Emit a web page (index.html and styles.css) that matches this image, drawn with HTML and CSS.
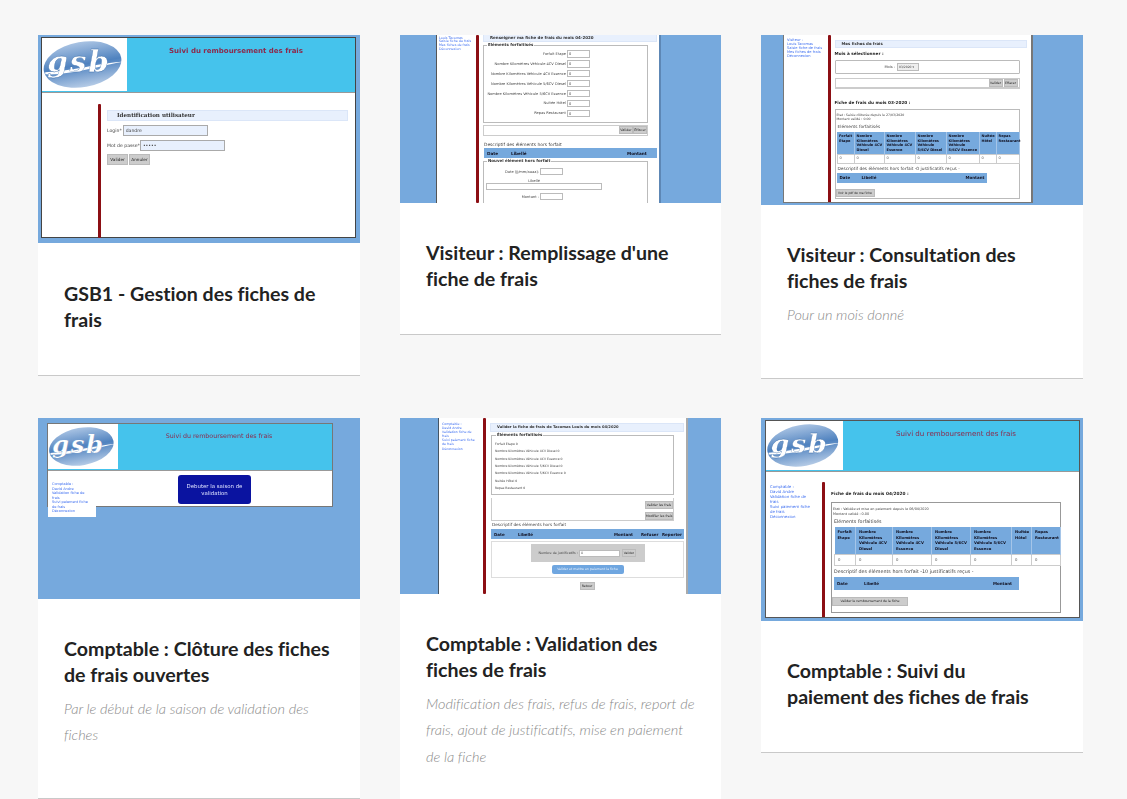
FILE: index.html
```html
<!DOCTYPE html>
<html lang="en">
	<head>
		<title>GSB1 - Gestion des fiches de frais</title>
		<link rel="stylesheet" href="styles.css">
	</head>
	<body>
		<svg class="defs" width="0" height="0">
			<defs>
				<linearGradient id="oval" x1="0" y1="0" x2="0" y2="1">
					<stop offset="0" stop-color="#a9c3e3"/>
					<stop offset="0.5" stop-color="#4f82bf"/>
					<stop offset="1" stop-color="#b5cbe6"/>
				</linearGradient>
				<symbol id="gsb" viewBox="0 0 86 54">
					<ellipse cx="41" cy="27" rx="40" ry="23" transform="rotate(-10 41 27)" fill="url(#oval)"/>
					<path d="M3 35 C30 34 60 25 84 24 C60 28 30 38 3 37z" fill="#fff"/>
					<text x="5" y="35" class="gsb-text">gsb</text>
				</symbol>
			</defs>
		</svg>
		<main class="grid">
			<article class="card">
				<div class="shot shot1">
					<div class="win win1">
						<header class="hdr">
							<svg class="logo"><use href="#gsb"/></svg>
							<div class="hdr-title">Suivi du remboursement des frais</div>
						</header>
						<div class="page">
							<nav class="menu"></nav>
							<div class="bar"></div>
							<div class="main">
								<div class="heading">Identification utilisateur</div>
								<div class="login"><span>Login*</span><i class="field">dandre</i></div>
								<div class="login"><span>Mot de passe*</span><i class="field">•••••</i></div>
								<div class="btns"><b class="btn">Valider</b><b class="btn">Annuler</b></div>
							</div>
						</div>
					</div>
				</div>
				<div class="text">
					<h2>GSB1 - Gestion des fiches de frais</h2>
				</div>
			</article>

			<article class="card">
				<div class="shot shot2">
					<div class="win win2">
						<div class="page">
							<nav class="menu">
								<a>Visiteur :</a>
								<a>Louis Tacomas</a>
								<a>Saisie fiche de frais</a>
								<a>Mes fiches de frais</a>
								<a>Déconnexion</a>
							</nav>
							<div class="bar"></div>
							<div class="main">
								<div class="heading">Renseigner ma fiche de frais du mois 04-2020</div>
								<fieldset class="set rows">
									<legend>Eléments forfaitisés</legend>
									<div class="row"><span>Forfait Etape</span><i class="field">0</i></div>
									<div class="row"><span>Nombre Kilomètres Véhicule 4CV Diesel</span><i class="field">0</i></div>
									<div class="row"><span>Nombre Kilomètres Véhicule 4CV Essence</span><i class="field">0</i></div>
									<div class="row"><span>Nombre Kilomètres Véhicule 5/6CV Diesel</span><i class="field">0</i></div>
									<div class="row"><span>Nombre Kilomètres Véhicule 5/6CV Essence</span><i class="field">0</i></div>
									<div class="row"><span>Nuitée Hôtel</span><i class="field">0</i></div>
									<div class="row"><span>Repas Restaurant</span><i class="field">0</i></div>
								</fieldset>
								<div class="actions"><b class="btn">Valider</b><b class="btn">Effacer</b></div>
								<div class="sub">Descriptif des éléments hors forfait</div>
								<div class="thead"><span>Date</span><span>Libellé</span><span>Montant</span></div>
								<fieldset class="set extra">
									<legend>Nouvel élément hors forfait</legend>
									<div class="row"><span>Date (jj/mm/aaaa):</span><i class="field"></i></div>
									<div class="lib">Libellé</div>
									<i class="field wide"></i>
									<div class="row"><span>Montant :</span><i class="field"></i></div>
								</fieldset>
							</div>
						</div>
					</div>
				</div>
				<div class="text">
					<h2>Visiteur : Remplissage d'une fiche de frais</h2>
				</div>
			</article>

			<article class="card">
				<div class="shot shot3">
					<div class="win win3">
						<div class="page">
							<nav class="menu">
								<a>Visiteur :</a>
								<a>Louis Tacomas</a>
								<a>Saisie fiche de frais</a>
								<a>Mes fiches de frais</a>
								<a>Déconnexion</a>
							</nav>
							<div class="bar"></div>
							<div class="main">
								<div class="heading">Mes fiches de frais</div>
								<div class="strong pick">Mois à sélectionner :</div>
								<div class="set month"><span>Mois :</span><i class="select">03/2020 ▾</i></div>
								<div class="actions"><b class="btn">Valider</b><b class="btn">Effacer</b></div>
								<div class="strong period">Fiche de frais du mois 03-2020 :</div>
								<div class="set sheet">
									<div class="etat">Etat : Saisie clôturée depuis le 27/03/2020<br>Montant validé : 0.00</div>
									<div class="sub">Eléments forfaitisés</div>
									<table class="tbl">
										<tr><th>Forfait Etape</th><th>Nombre Kilomètres Véhicule 4CV Diesel</th><th>Nombre Kilomètres Véhicule 4CV Essence</th><th>Nombre Kilomètres Véhicule 5/6CV Diesel</th><th>Nombre Kilomètres Véhicule 5/6CV Essence</th><th>Nuitée Hôtel</th><th>Repas Restaurant</th></tr>
										<tr><td>0</td><td>0</td><td>0</td><td>0</td><td>0</td><td>0</td><td>0</td></tr>
									</table>
									<div class="sub after">Descriptif des éléments hors forfait -0 justificatifs reçus -</div>
									<div class="thead"><span>Date</span><span>Libellé</span><span>Montant</span></div>
									<b class="btn last">Voir le pdf de ma fiche</b>
								</div>
							</div>
						</div>
					</div>
				</div>
				<div class="text">
					<h2>Visiteur : Consultation des fiches de frais</h2>
					<p>Pour un mois donné</p>
				</div>
			</article>

			<article class="card">
				<div class="shot shot4">
					<div class="win win4">
						<header class="hdr">
							<svg class="logo"><use href="#gsb"/></svg>
							<div class="hdr-title">Suivi du remboursement des frais</div>
						</header>
						<div class="page">
							<nav class="menu">
								<a>Comptable :</a>
								<a>David Andre</a>
								<a>Validation fiche de<br>frais</a>
								<a>Suivi paiement fiche<br>de frais</a>
								<a>Déconnexion</a>
							</nav>
							<div class="main">
								<div class="start">Debuter la saison de validation</div>
							</div>
						</div>
					</div>
				</div>
				<div class="text">
					<h2>Comptable : Clôture des fiches de frais ouvertes</h2>
					<p>Par le début de la saison de validation des fiches</p>
				</div>
			</article>

			<article class="card">
				<div class="shot shot5">
					<div class="win win5">
						<div class="page">
							<nav class="menu">
								<a>Comptable :</a>
								<a>David Andre</a>
								<a>Validation fiche de<br>frais</a>
								<a>Suivi paiement fiche<br>de frais</a>
								<a>Déconnexion</a>
							</nav>
							<div class="bar"></div>
							<div class="main">
								<div class="heading">Valider la fiche de frais de Tacomas Louis du mois 04/2020</div>
								<fieldset class="set lines">
									<legend>Éléments forfaitisés</legend>
									<div>Forfait Etape 0</div>
									<div>Nombre Kilomètres Véhicule 4CV Diesel 0</div>
									<div>Nombre Kilomètres Véhicule 4CV Essence 0</div>
									<div>Nombre Kilomètres Véhicule 5/6CV Diesel 0</div>
									<div>Nombre Kilomètres Véhicule 5/6CV Essence 0</div>
									<div>Nuitée Hôtel 0</div>
									<div>Repas Restaurant 0</div>
								</fieldset>
								<div class="actions stack"><b class="btn">Valider les frais</b><b class="btn">Modifier les frais</b></div>
								<div class="sub">Descriptif des éléments hors forfait</div>
								<div class="thead"><span>Date</span><span>Libellé</span><span>Montant</span><span>Refuser</span><span>Reporter</span></div>
								<div class="set pay">
									<div class="just"><span>Nombre de justificatifs :</span><i class="field">0</i><b class="btn">Valider</b></div>
									<div class="paybtn">Valider et mettre en paiement la fiche</div>
								</div>
								<b class="btn back">Retour</b>
							</div>
						</div>
					</div>
				</div>
				<div class="text">
					<h2>Comptable : Validation des fiches de frais</h2>
					<p>Modification des frais, refus de frais, report de frais, ajout de justificatifs, mise en paiement de la fiche</p>
				</div>
			</article>

			<article class="card">
				<div class="shot shot6">
					<div class="win win6">
						<header class="hdr">
							<svg class="logo"><use href="#gsb"/></svg>
							<div class="hdr-title">Suivi du remboursement des frais</div>
						</header>
						<div class="page">
							<nav class="menu">
								<a>Comptable :</a>
								<a>David Andre</a>
								<a>Validation fiche de<br>frais</a>
								<a>Suivi paiement fiche<br>de frais</a>
								<a>Déconnexion</a>
							</nav>
							<div class="bar"></div>
							<div class="main">
								<div class="strong period">Fiche de frais du mois 04/2020 :</div>
								<div class="set sheet">
									<div class="etat">Etat : Validée et mise en paiement depuis le 06/04/2020<br>Montant validé : 0.00</div>
									<div class="sub">Eléments forfaitisés</div>
									<table class="tbl">
										<tr><th>Forfait Etape</th><th>Nombre Kilomètres Véhicule 4CV Diesel</th><th>Nombre Kilomètres Véhicule 4CV Essence</th><th>Nombre Kilomètres Véhicule 5/6CV Diesel</th><th>Nombre Kilomètres Véhicule 5/6CV Essence</th><th>Nuitée Hôtel</th><th>Repas Restaurant</th></tr>
										<tr><td>0</td><td>0</td><td>0</td><td>0</td><td>0</td><td>0</td><td>0</td></tr>
									</table>
									<div class="sub after">Descriptif des éléments hors forfait -10 justificatifs reçus -</div>
									<div class="thead"><span>Date</span><span>Libellé</span><span>Montant</span></div>
									<b class="btn last">Valider le remboursement de la fiche</b>
								</div>
							</div>
						</div>
					</div>
				</div>
				<div class="text">
					<h2>Comptable : Suivi du<br>paiement des fiches de frais</h2>
				</div>
			</article>
		</main>
	</body>
</html>
```
FILE: styles.css
```css
html, body {
	height: 799px;
	overflow: hidden;
}
body {
	margin: 0;
	background: #f7f7f7;
	font-family: Lato, "Open Sans", sans-serif;
	color: #222;
	font-variant-ligatures: none;
}
.defs {
	display: block;
	height: 0;
}
.grid {
	display: grid;
	grid-template-columns: 322px 321px 322px;
	grid-template-rows: 342px auto;
	column-gap: 40px;
	row-gap: 41px;
	padding: 35px 0 0 38px;
	align-items: start;
}
.card {
	background: #fff;
	border-bottom: 1px solid #c9c9c9;
}
.text {
	padding: 37px 26px 41px;
}
.shot1 + .text {
	padding-top: 38px;
}
h2 {
	margin: 0;
	font-size: 19.6px;
	line-height: 26.4px;
	font-weight: 700;
	color: #222;
}
p {
	margin: 7px 0 8.5px;
	font-size: 14.5px;
	line-height: 26.4px;
	font-weight: 300;
	font-style: italic;
	color: #8a8a8a;
}

/* thumbnails of the application */
.shot {
	background: #76a9dd;
	overflow: hidden;
	box-sizing: border-box;
	font-family: "DejaVu Sans", sans-serif;
}
.win {
	background: #fff;
	box-sizing: border-box;
	filter: blur(0.7px);
	color: #444;
}
.hdr {
	display: flex;
	background: #45c3ec;
	border-bottom: 1px solid #999;
}
.logo {
	background: #fff;
	display: block;
	flex: none;
}
.gsb-text {
	font-family: "DejaVu Serif", serif;
	font-style: italic;
	font-weight: 700;
	font-size: 30px;
	letter-spacing: 2px;
	fill: #fff;
	stroke: #3d6ea8;
	stroke-width: 0.3px;
}
.hdr-title {
	flex: 1;
	text-align: center;
	color: #8c2a4c;
	font-weight: 700;
}
.page {
	display: flex;
	align-items: stretch;
}
.menu {
	flex: none;
	box-sizing: border-box;
	font-size: 3.9px;
	line-height: 4.5px;
	color: #3a6cf0;
}
.menu a {
	display: block;
	white-space: nowrap;
}
.bar {
	flex: none;
	background: #8c0f14;
	border-radius: 1px;
}
.main {
	flex: 1;
	min-width: 0;
}
.heading {
	background: #e8f0fd;
	border: 1px solid #dbe6f8;
	box-sizing: border-box;
	font-weight: 700;
	color: #333;
}
.field {
	display: block;
	background: #fff;
	border: 1px solid #bbb;
	box-sizing: border-box;
	font-style: normal;
	padding-left: 1px;
}
.btn {
	display: block;
	flex: none;
	background: #ccc;
	border: 1px solid #bbb;
	box-sizing: border-box;
	text-align: center;
	font-weight: 400;
	color: #222;
}
.set {
	border: 1px solid #bbb;
	box-sizing: border-box;
	margin: 0;
	padding: 0;
	min-width: 0;
}
legend {
	margin-left: 3px;
	padding: 0 1px;
	font-weight: 700;
	color: #333;
}
.row {
	display: flex;
	align-items: center;
	justify-content: flex-end;
}
.row span {
	margin-right: 1px;
}
.actions {
	display: flex;
	justify-content: flex-end;
	border: 1px solid #ccc;
	box-sizing: border-box;
}
.thead {
	display: flex;
	align-items: center;
	background: #76a9dd;
	font-weight: 700;
	color: #112;
}
.strong {
	font-weight: 700;
	color: #222;
}
.sub {
	color: #444;
}
.tbl {
	border-collapse: collapse;
	table-layout: fixed;
	color: #112;
}
.tbl th {
	background: #76a9dd;
	box-sizing: border-box;
	text-align: left;
	vertical-align: top;
	font-weight: 700;
	border-right: 1px solid #a5c5e8;
}
.tbl td {
	box-sizing: border-box;
	border: 1px solid #ccc;
	color: #555;
}

/* card 1 */
.shot1 {
	height: 208px;
	padding: 2px 4px 5px 3px;
}
.win1 {
	height: 201px;
	border: 1px solid #444;
}
.win1 .hdr {
	height: 54px;
}
.win1 .logo {
	width: 85px;
	height: 53px;
}
.win1 .hdr-title {
	font-size: 7px;
	padding: 9px 10px 0 0;
}
.win1 .menu {
	width: 56px;
}
.win1 .page {
	height: 145px;
	padding-top: 11px;
	box-sizing: border-box;
}
.win1 .bar {
	width: 3px;
}
.win1 .main {
	padding: 6px 7px 0 6px;
}
.win1 .heading {
	height: 11px;
	padding-left: 9px;
	font-size: 5.6px;
	line-height: 9px;
	font-family: "DejaVu Serif", serif;
}
.login {
	display: flex;
	align-items: center;
	font-size: 4.6px;
	height: 11px;
	margin-top: 4px;
}
.btns {
	display: flex;
	gap: 1px;
	margin-top: 3px;
}
.win1 .login .field {
	width: 85px;
	height: 11px;
	margin-left: 1px;
	background: #e8f0fd;
	font-size: 4.6px;
	line-height: 9px;
	border-color: #aaa;
	padding-left: 2px;
}
.win1 .login:nth-child(3) .field {
	margin-left: 0;
}
.win1 .btn {
	width: 21px;
	height: 11px;
	font-size: 4.2px;
	line-height: 9px;
}

/* card 2 */
.shot2 {
	height: 168px;
	padding: 0 60px 0 36px;
}
.win2 {
	height: 168px;
	border-left: 1px solid #555;
	border-right: 2px solid #5d87b5;
	overflow: hidden;
}
.win2 .menu {
	width: 39px;
	height: 168px;
	padding-left: 2px;
	font-size: 3.3px;
	line-height: 3.7px;
}
.win2 .menu a:first-child {
	margin-top: -2px;
}
.win2 .bar {
	width: 3px;
	height: 168px;
}
.win2 .main {
	padding: 0 2px 0 4px;
	font-size: 3.6px;
}
.win2 .heading {
	height: 7px;
	border-top: 0;
	padding-left: 6px;
	font-size: 4px;
	line-height: 5px;
	margin-bottom: 1px;
}
.win2 .set {
	width: 165px;
	border-width: 1.5px;
}
.win2 legend {
	font-size: 4px;
	line-height: 4px;
}
.win2 .rows {
	height: 80px;
	padding-top: 2px;
}
.win2 .row {
	width: 106px;
	height: 9.9px;
}
.win2 .row .field {
	width: 23px;
	height: 7.5px;
	line-height: 6px;
}
.win2 .actions {
	width: 165px;
	height: 11px;
	margin-top: 2px;
}
.win2 .btn {
	width: 14px;
	height: 8px;
	line-height: 6px;
	font-size: 3.3px;
}
.win2 .sub {
	margin: 6px 0 0 1px;
	font-size: 4.4px;
	line-height: 6px;
}
.win2 .thead {
	height: 10px;
	margin-left: 1px;
	padding-left: 3px;
	font-size: 4.2px;
}
.win2 .thead span:nth-child(1) {
	width: 24px;
}
.win2 .thead span:nth-child(2) {
	width: 116px;
}
.win2 .extra {
	margin-top: 1px;
	height: 60px;
	padding-top: 4px;
}
.win2 .extra .row {
	width: 79px;
	height: 9px;
}
.lib {
	width: 100px;
	text-align: center;
	line-height: 5px;
	margin-top: 3px;
}
.win2 .wide {
	width: 116px;
	height: 7px;
	margin: -1px 0 2px 2px;
}

/* card 3 */
.shot3 {
	height: 170px;
	padding: 0 50px 2px 22px;
}
.win3 {
	height: 168px;
	border: 1px solid #777;
	border-top: 0;
	border-right-width: 2px;
	overflow: hidden;
}
.win3 .menu {
	width: 44px;
	padding: 3px 0 0 3px;
	font-size: 3.6px;
	line-height: 4px;
}
.win3 .bar {
	width: 2.5px;
	height: 168px;
}
.win3 .main {
	padding: 5px 4px 0 4px;
	font-size: 3.6px;
}
.win3 .heading {
	height: 8px;
	padding-left: 6px;
	font-size: 3.9px;
	line-height: 6px;
}
.pick {
	font-size: 4.2px;
	margin-top: 3px;
	line-height: 6px;
}
.month {
	display: flex;
	align-items: center;
	width: 185px;
	height: 14px;
	margin-top: 3px;
	padding-left: 49px;
	border: 1px solid #bbb;
	border-radius: 1px;
}
.select {
	border: 1px solid #bbb;
	background: #eee;
	font-style: normal;
	margin-left: 2px;
	padding: 1px;
	width: 22px;
	box-sizing: border-box;
	white-space: nowrap;
	overflow: hidden;
	font-size: 3px;
}
.win3 .actions {
	width: 185px;
	height: 11px;
	margin-top: 4px;
	padding-right: 1px;
	gap: 1px;
	border-top: 1px solid #ccc;
	border-bottom: 2px solid #ccc;
}
.win3 .actions .btn {
	width: 14px;
	height: 8px;
	font-size: 3.2px;
	line-height: 6px;
}
.win3 .period {
	margin-top: 11px;
	font-size: 4.2px;
	line-height: 6px;
}
.win3 .sheet {
	width: 185px;
	height: 90px;
	margin-top: 3px;
	padding: 3px 1px 0;
}
.win3 .etat {
	font-size: 3.2px;
	line-height: 4px;
}
.win3 .sub {
	font-size: 4.3px;
	line-height: 6px;
	margin: 3px 0 2px 1px;
}
.win3 .sub.after {
	margin: 2px 0 1px 1px;
}
.win3 .tbl {
	width: 183px;
	font-size: 3.5px;
	line-height: 4.5px;
}
.win3 .tbl th {
	height: 22px;
	padding: 2px 1px 0 2px;
}
.win3 .tbl td {
	height: 9px;
	padding: 0 2px;
}
.win3 .tbl th:nth-child(1) { width: 17px; }
.win3 .tbl th:nth-child(2) { width: 30px; }
.win3 .tbl th:nth-child(3), .win3 .tbl th:nth-child(4) { width: 31px; }
.win3 .tbl th:nth-child(5) { width: 33px; }
.win3 .tbl th:nth-child(6) { width: 17px; }
.win3 .thead {
	width: 150px;
	height: 10px;
	padding-left: 3px;
	box-sizing: border-box;
	font-size: 4px;
}
.win3 .thead span:nth-child(1) {
	width: 22px;
}
.win3 .thead span:nth-child(2) {
	width: 104px;
}
.win3 .last {
	width: 39px;
	height: 8px;
	margin: 6px 0 0 -1px;
	font-size: 3px;
	line-height: 6px;
	white-space: nowrap;
}

/* card 4 */
.shot4 {
	height: 181px;
	padding: 5px 27px 0 9px;
}
.win4 {
	height: 84px;
	border: 1px solid #777;
}
.win4 .hdr {
	height: 46px;
}
.win4 .logo {
	width: 70px;
	height: 45px;
}
.win4 .hdr-title {
	font-weight: 400;
	padding: 8px 0 0 0;
	font-size: 6.3px;
	margin-left: -12px;
}
.win4 .menu {
	width: 48px;
	height: 46px;
	padding: 11px 0 0 4px;
	background: #fff;
	font-size: 3.5px;
}
.win4 .main {
	padding: 4px 0 0 82px;
}
.start {
	width: 73px;
	height: 29px;
	box-sizing: border-box;
	padding: 8px 8px 0;
	background: #0a13a0;
	border-radius: 3px;
	color: #dfe3ff;
	text-align: center;
	font-size: 5.4px;
	line-height: 7px;
}

/* card 5 */
.shot5 {
	height: 176px;
	padding: 0 33px 0 38px;
}
.win5 {
	height: 176px;
	border-left: 1px solid #456;
	border-right: 2px solid #aaa;
	overflow: hidden;
}
.win5 .menu {
	width: 44px;
	padding: 4px 0 0 3px;
	font-size: 3.2px;
	line-height: 4.1px;
}
.win5 .bar {
	width: 3px;
	height: 176px;
}
.win5 .main {
	padding: 5px 2px 0 4px;
	font-size: 3.5px;
}
.win5 .heading {
	height: 9px;
	padding-left: 6px;
	font-size: 3.7px;
	line-height: 7px;
	white-space: nowrap;
}
.win5 .lines {
	width: 183px;
	height: 62px;
	margin: 1px 0 0 1px;
	padding: 4px 0 0 3px;
	border-width: 1.5px;
	line-height: 7.33px;
	font-size: 3.1px;
}
.win5 legend {
	font-size: 4px;
	line-height: 4px;
	margin-left: 1px;
}
.win5 .stack {
	flex-direction: column;
	align-items: flex-end;
	gap: 3px;
	width: 183px;
	height: 23px;
	margin: 3px 0 0 1px;
	border-top: 0;
	padding-top: 1px;
}
.win5 .stack .btn {
	height: 8px;
	width: 28px;
	font-size: 3.2px;
	line-height: 6px;
	white-space: nowrap;
}
.win5 .sub {
	margin: 1px 0 1px 2px;
	font-size: 4.2px;
	line-height: 6px;
}
.win5 .thead {
	height: 10px;
	margin-left: 1px;
	padding-left: 3px;
	font-size: 4px;
}
.win5 .thead span:nth-child(1) { width: 24px; }
.win5 .thead span:nth-child(2) { width: 96px; }
.win5 .thead span:nth-child(3) { width: 27px; }
.win5 .thead span:nth-child(4) { width: 21px; }
.pay {
	margin: 2px 0 0 1px;
	height: 37px;
	padding-top: 2px;
	border-color: #ddd;
}
.just {
	display: flex;
	align-items: center;
	width: 114px;
	height: 18px;
	margin: 0 auto;
	padding-left: 8px;
	box-sizing: border-box;
	background: #ccc;
	font-size: 3.3px;
}
.just span {
	margin-right: 1px;
}
.just .field {
	width: 41px;
	height: 7px;
	line-height: 5px;
	margin-right: 2px;
}
.just .btn {
	width: 14px;
	height: 8px;
	line-height: 6px;
	font-size: 3px;
}
.paybtn {
	width: 72px;
	height: 9px;
	margin: 3px auto 0;
	background: #6fa6e0;
	border-radius: 2px;
	color: #e6f0fb;
	text-align: center;
	font-size: 3.2px;
	line-height: 9px;
	white-space: nowrap;
}
.back {
	width: 15px;
	height: 8px;
	margin: 4px auto 0;
	font-size: 3.2px;
	line-height: 6px;
}

/* card 6 */
.shot6 {
	height: 203px;
	padding: 2px 3px 3px 4px;
}
.win6 {
	height: 198px;
	border: 1px solid #555;
	overflow: hidden;
}
.win6 .hdr {
	height: 50px;
}
.win6 .logo {
	width: 77px;
	height: 49px;
}
.win6 .hdr-title {
	font-size: 7.1px;
	padding: 8px 10px 0 0;
	font-weight: 400;
}
.win6 .page {
	padding-top: 10px;
}
.win6 .menu {
	width: 56px;
	padding: 3px 0 0 4px;
	font-size: 3.9px;
	line-height: 4.95px;
}
.win6 .bar {
	width: 3px;
	height: 137px;
}
.win6 .main {
	padding: 0 0 0 6px;
}
.win6 .period {
	margin-top: 9px;
	font-size: 4.3px;
	line-height: 6px;
}
.win6 .sheet {
	width: 230px;
	height: 111px;
	margin-top: 5px;
	padding: 4px 1px 0;
	border-color: #999;
}
.win6 .etat {
	font-size: 3.4px;
	line-height: 5px;
}
.win6 .sub {
	margin: 2px 0 2px 1px;
	font-size: 4.8px;
	line-height: 6px;
}
.win6 .sub.after {
	margin: 3px 0 2px 1px;
}
.win6 .tbl {
	width: 227px;
	margin-left: 1px;
	font-size: 3.8px;
	line-height: 5.7px;
}
.win6 .tbl th {
	height: 27px;
	padding: 2px 1px 0 3px;
}
.win6 .tbl td {
	height: 11px;
	padding: 0 3px;
}
.win6 .tbl th:nth-child(1) { width: 21px; }
.win6 .tbl th:nth-child(2) { width: 37px; }
.win6 .tbl th:nth-child(3), .win6 .tbl th:nth-child(4) { width: 39px; }
.win6 .tbl th:nth-child(5) { width: 41px; }
.win6 .tbl th:nth-child(6) { width: 20px; }
.win6 .thead {
	width: 185px;
	height: 13px;
	margin-left: 1px;
	padding-left: 3px;
	box-sizing: border-box;
	font-size: 4px;
}
.win6 .thead span:nth-child(1) { width: 27px; }
.win6 .thead span:nth-child(2) { width: 129px; }
.win6 .last {
	width: 76px;
	height: 9px;
	margin: 7px 0 0 -1px;
	font-size: 3.2px;
	line-height: 7px;
	white-space: nowrap;
}
```
